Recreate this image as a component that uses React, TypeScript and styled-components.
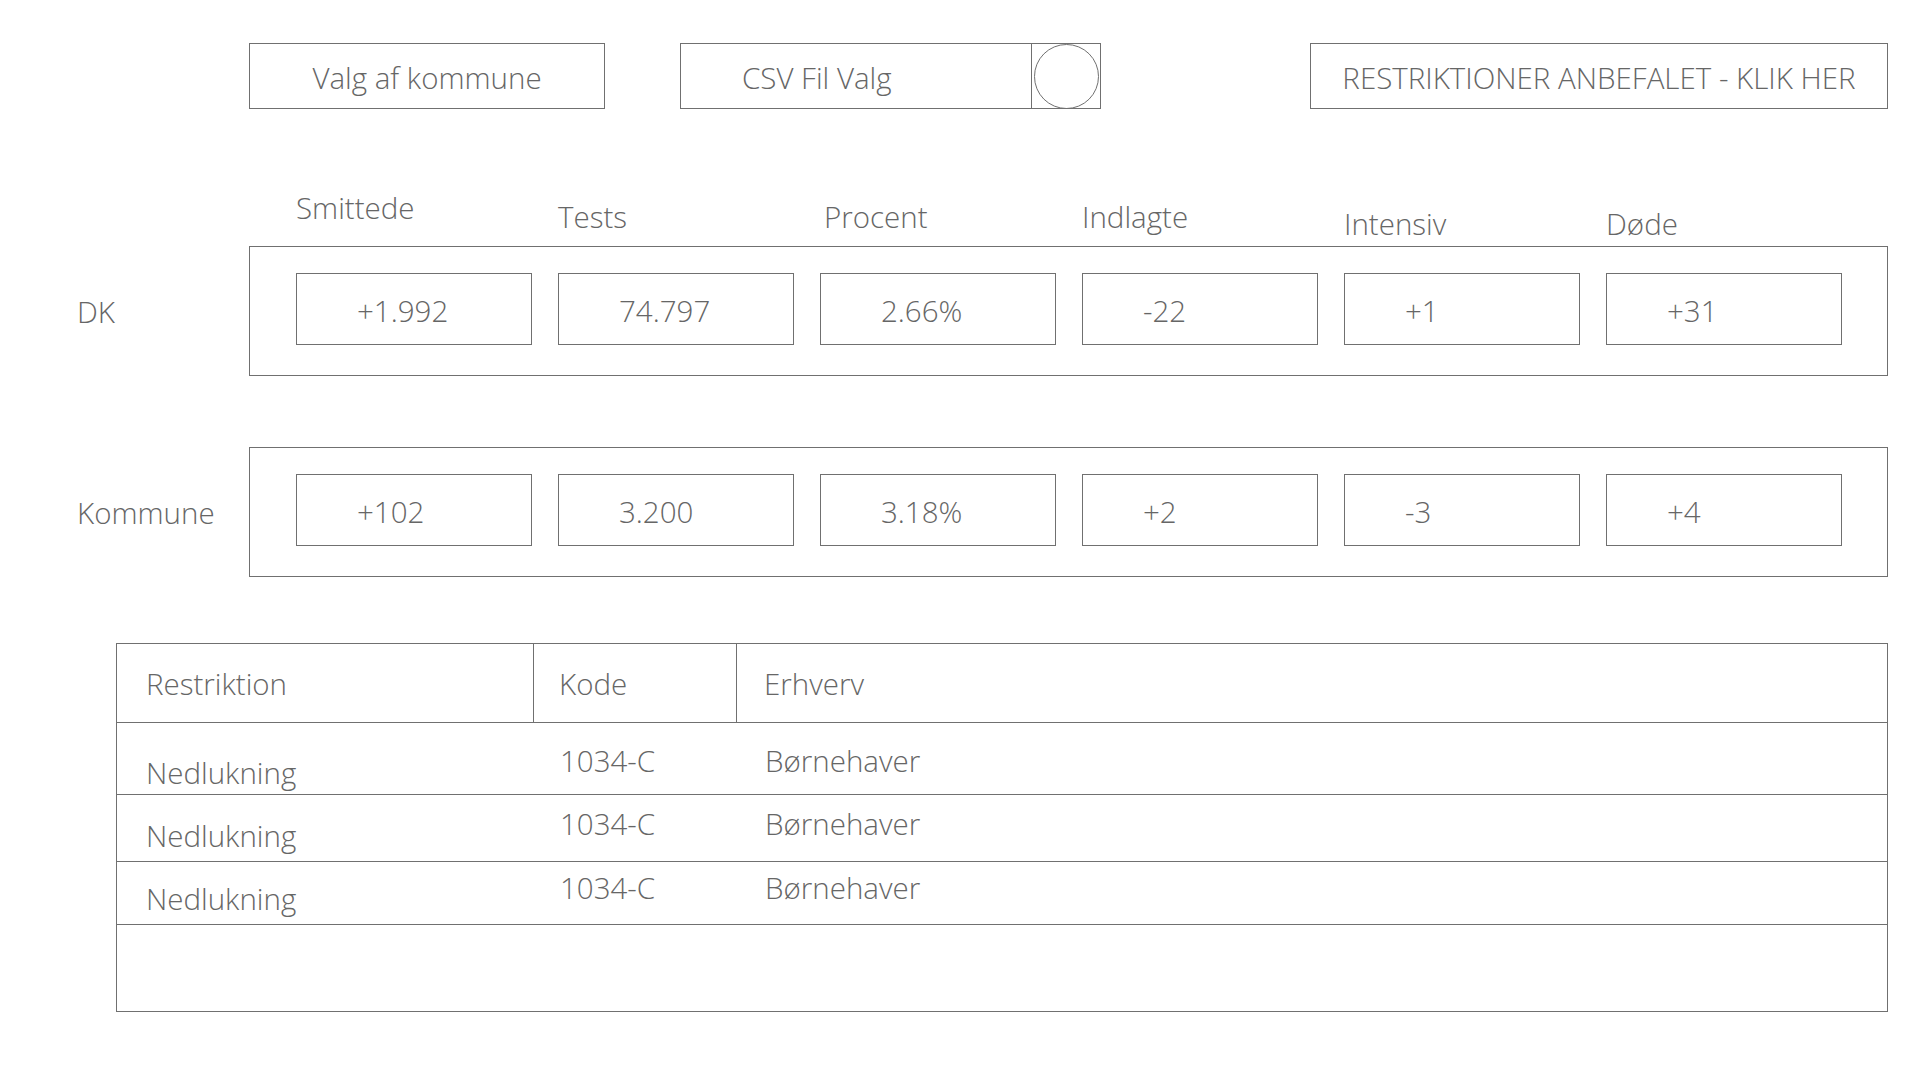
import React from "react";
import styled, { createGlobalStyle } from "styled-components";

const LINE = "#707070";
const INK = "#666666";

const GlobalStyle = createGlobalStyle`
  html, body { margin: 0; padding: 0; background: #ffffff; }
  body { font-family: "Open Sans", "Noto Sans", sans-serif; color: ${INK}; }
  * { box-sizing: border-box; }
`;

const Page = styled.div`
  width: 1920px;
  height: 1080px;
  overflow: hidden;
  padding-top: 43px;
  font-size: 29.5px;
  font-weight: 350;
  line-height: 36px;
`;

const TopBar = styled.div`
  display: flex;
  margin-left: 249px;
  width: 1639px;
  height: 66px;
`;

const Button = styled.div<{ $width: number }>`
  width: ${(p) => p.$width}px;
  height: 100%;
  border: 1px solid ${LINE};
  display: flex;
  align-items: center;
  justify-content: center;
  padding-top: 3px;
  white-space: nowrap;
`;

const PushRight = styled(Button)`
  margin-left: auto;
`;

const CsvPicker = styled.div`
  width: 421px;
  height: 100%;
  margin-left: 75px;
  border: 1px solid ${LINE};
  display: flex;
`;

const CsvLabel = styled.div`
  flex: 1;
  display: flex;
  align-items: center;
  padding-left: 61px;
  padding-top: 3px;
`;

const CircleCell = styled.div`
  width: 69px;
  border-left: 1px solid ${LINE};
  display: flex;
  align-items: center;
  justify-content: center;
`;

const Circle = styled.div`
  width: 65px;
  height: 65px;
  border: 1px solid ${LINE};
  border-radius: 50%;
`;

const Grid6 = styled.div`
  display: grid;
  grid-template-columns: repeat(6, 236px);
  column-gap: 26px;
`;

const HeaderRow = styled(Grid6)`
  margin-top: 81px;
  margin-left: 296px;
  align-items: start;
`;

const ColHeader = styled.div<{ $drop: number; $shift?: number }>`
  padding-top: ${(p) => p.$drop}px;
  padding-left: ${(p) => p.$shift ?? 0}px;
  white-space: nowrap;
`;

const DataRow = styled.div<{ $gap: number }>`
  display: flex;
  align-items: center;
  margin-top: ${(p) => p.$gap}px;
  padding-left: 77px;
`;

const RowLabel = styled.div`
  width: 172px;
  padding-top: 2px;
`;

const Panel = styled.div`
  width: 1639px;
  height: 130px;
  border: 1px solid ${LINE};
  padding: 26px 0 0 46px;
`;

const Cell = styled.div`
  height: 72px;
  border: 1px solid ${LINE};
  display: flex;
  align-items: center;
  padding-left: 60px;
  padding-top: 4px;
`;

const Table = styled.div`
  margin-top: 66px;
  margin-left: 116px;
  width: 1772px;
  border: 1px solid ${LINE};
`;

const TableRow = styled.div<{ $height: number }>`
  display: grid;
  grid-template-columns: 417px 203px 1fr;
  height: ${(p) => p.$height}px;
  border-bottom: 1px solid ${LINE};
`;

const HeadCell = styled.div<{ $pad: number; $divider?: boolean }>`
  display: flex;
  align-items: center;
  padding-left: ${(p) => p.$pad}px;
  padding-top: 2px;
  border-right: ${(p) => (p.$divider ? `1px solid ${LINE}` : "none")};
`;

const BodyCell = styled.div<{ $pad: number; $top: number }>`
  padding-left: ${(p) => p.$pad}px;
  padding-top: ${(p) => p.$top}px;
`;

const EmptyRow = styled.div`
  height: 86px;
`;

const headers = [
  { t: "Smittede", d: 0, s: 0 },
  { t: "Tests", d: 9, s: 0 },
  { t: "Procent", d: 9, s: 4 },
  { t: "Indlagte", d: 9, s: 0 },
  { t: "Intensiv", d: 16, s: 0 },
  { t: "Døde", d: 16, s: 0 },
];

const dk = ["+1.992", "74.797", "2.66%", "-22", "+1", "+31"];
const kommune = ["+102", "3.200", "3.18%", "+2", "-3", "+4"];

const rows = [
  { h: 72, code: 20, restr: 32 },
  { h: 67, code: 11, restr: 23 },
  { h: 63, code: 8, restr: 19 },
];

export default function App() {
  return (
    <>
      <GlobalStyle />
      <Page>
        <TopBar>
          <Button $width={356}>Valg af kommune</Button>
          <CsvPicker>
            <CsvLabel>CSV Fil Valg</CsvLabel>
            <CircleCell>
              <Circle />
            </CircleCell>
          </CsvPicker>
          <PushRight $width={578}>RESTRIKTIONER ANBEFALET - KLIK HER</PushRight>
        </TopBar>

        <HeaderRow>
          {headers.map((h) => (
            <ColHeader key={h.t} $drop={h.d} $shift={h.s}>
              {h.t}
            </ColHeader>
          ))}
        </HeaderRow>

        <DataRow $gap={4}>
          <RowLabel>DK</RowLabel>
          <Panel>
            <Grid6>
              {dk.map((v) => (
                <Cell key={v}>{v}</Cell>
              ))}
            </Grid6>
          </Panel>
        </DataRow>

        <DataRow $gap={71}>
          <RowLabel>Kommune</RowLabel>
          <Panel>
            <Grid6>
              {kommune.map((v) => (
                <Cell key={v}>{v}</Cell>
              ))}
            </Grid6>
          </Panel>
        </DataRow>

        <Table>
          <TableRow $height={79}>
            <HeadCell $pad={29} $divider>
              Restriktion
            </HeadCell>
            <HeadCell $pad={25} $divider>
              Kode
            </HeadCell>
            <HeadCell $pad={27}>Erhverv</HeadCell>
          </TableRow>
          {rows.map((r, i) => (
            <TableRow key={i} $height={r.h}>
              <BodyCell $pad={29} $top={r.restr}>
                Nedlukning
              </BodyCell>
              <BodyCell $pad={26} $top={r.code}>
                1034-C
              </BodyCell>
              <BodyCell $pad={28} $top={r.code}>
                Børnehaver
              </BodyCell>
            </TableRow>
          ))}
          <EmptyRow />
        </Table>
      </Page>
    </>
  );
}
